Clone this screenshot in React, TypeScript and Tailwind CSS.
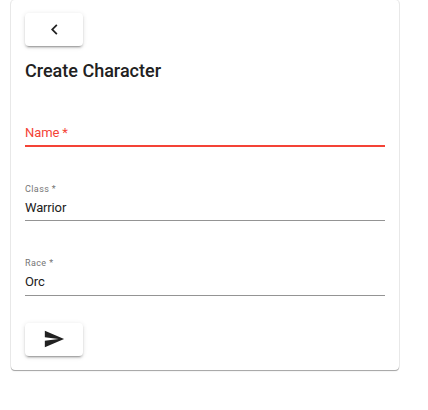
function Field({ label, value }: { label: string; value: string }) {
  return (
    <div className="flex flex-col border-b border-[#949494]">
      <label className="h-3 text-[9px] leading-3 tracking-[0.4px] text-[#757575]">{label} *</label>
      <span className="mt-[5px] text-[13px] leading-4 tracking-[-0.15px] text-[#212121]">{value}</span>
    </div>
  );
}

export default function App() {
  return (
    <div className="h-[410px] overflow-hidden bg-white pl-[11px] font-['Roboto',sans-serif]">
      <main className="flex h-[370px] w-[388px] flex-col rounded-[4px] px-[14px] shadow-[0_1px_0_0_#aaaaaa,0_0_0_1px_#e8e8e8,0_2px_1px_0_rgba(0,0,0,0.04)]">
        <button aria-label="Back" className="mt-[13px] flex h-[33px] w-[58px] shrink-0 items-center justify-center rounded-[4px] bg-white pb-px shadow-[0_3px_1px_-2px_rgba(0,0,0,0.2),0_2px_2px_rgba(0,0,0,0.14),0_1px_5px_rgba(0,0,0,0.12)]">
          <svg viewBox="0 0 24 24" className="size-[21px]" fill="#212121"><path d="M15.41 7.41 14 6l-6 6 6 6 1.41-1.41L10.83 12z" /></svg>
        </button>
        <h1 className="mt-[13px] text-[18px] font-medium leading-6 text-[#212121]">Create Character</h1>
        <div className="mt-10 flex h-[24px] flex-col border-b-2 border-[#f44336] text-[13px] leading-5 tracking-[-0.1px] text-[#f44336]">Name *</div>
        <div className="mt-[36px] grid grid-rows-[38px_38px] gap-[36px]">
          <Field label="Class" value="Warrior" />
          <div className="flex h-[39px] flex-col *:grow">
            <Field label="Race" value="Orc" />
          </div>
        </div>
        <button aria-label="Send" className="mt-[28px] flex h-[33px] w-[58px] shrink-0 items-center justify-center rounded-[4px] bg-white pb-px shadow-[0_3px_1px_-2px_rgba(0,0,0,0.2),0_2px_2px_rgba(0,0,0,0.14),0_1px_5px_rgba(0,0,0,0.12)]">
          <svg viewBox="0 0 24 24" className="size-[22px]" fill="#212121"><path d="M2.01 21 23 12 2.01 3 2 10l15 2-15 2z" /></svg>
        </button>
      </main>
    </div>
  );
}
